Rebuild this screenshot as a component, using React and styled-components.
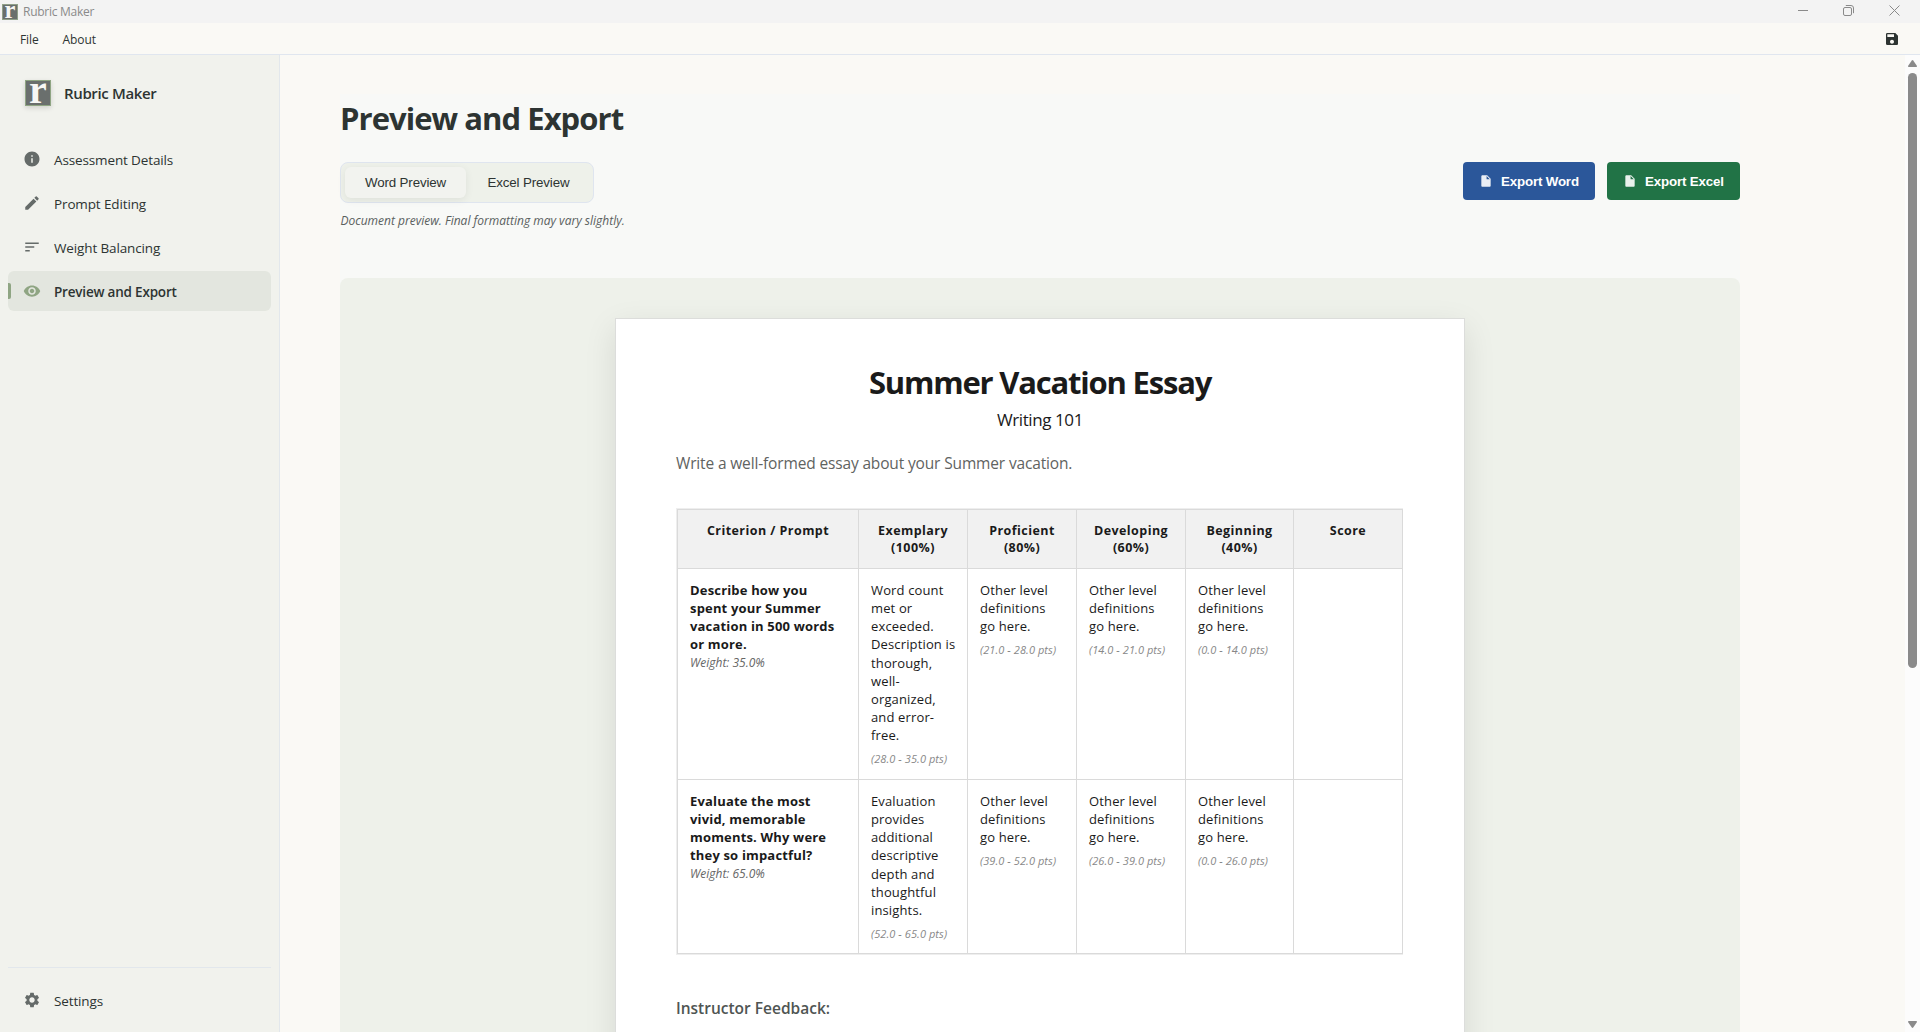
import React, { useState } from 'react';
import styled, { createGlobalStyle, css } from 'styled-components';
import {
    MdInfo,
    MdEdit,
    MdSort,
    MdVisibility,
    MdSettings,
    MdSave,
    MdInsertDriveFile,
} from 'react-icons/md';

const GlobalStyle = createGlobalStyle`
    * {
        box-sizing: border-box;
    }
    body {
        margin: 0;
        overflow: hidden;
        background: #faf9f5;
        color: #2d3432;
        font-family: 'Open Sans', 'Noto Sans', sans-serif;
    }
    h1, h2, h3, p {
        margin: 0;
    }
    button {
        border: none;
        font-family: 'Liberation Sans', Arial, sans-serif;
        font-size: 13.33px;
    }
`;

const Window = styled.div`
    display: flex;
    flex-direction: column;
    height: 100vh;
`;

const TitleBar = styled.header`
    display: flex;
    align-items: center;
    flex: none;
    height: 23px;
    padding: 0 20px 0 2px;
    background: #f3f3f3;
    color: #8a8a8a;
    font-size: 12px;
    letter-spacing: -0.27px;
    .name {
        margin-left: 5px;
        line-height: 23px;
    }
    .controls {
        display: flex;
        gap: 35px;
        margin: -3px 0 0 auto;
    }
`;

const MenuBar = styled.nav`
    display: flex;
    align-items: center;
    flex: none;
    gap: 24px;
    height: 32px;
    padding: 1px 20px 0 20px;
    border-bottom: 1px solid #e0e6ef;
    background: #faf9f5;
    font-size: 12px;
    letter-spacing: -0.1px;
    svg {
        margin-left: auto;
    }
`;

const Body = styled.div`
    display: flex;
    flex: 1;
    min-height: 0;
`;

const Sidebar = styled.aside`
    display: flex;
    flex-direction: column;
    flex: none;
    width: 280px;
    padding: 25px 8px 12px;
    border-right: 1px solid #e2e7ec;
    background: #f1f2ed;
`;

const Brand = styled.div`
    display: flex;
    align-items: center;
    gap: 13px;
    height: 26px;
    margin: 0 0 33px 17px;
    font-size: 15px;
    font-weight: 600;
    letter-spacing: -0.36px;
    svg {
        box-shadow: 0 2px 5px rgba(0, 0, 0, 0.14);
    }
`;

const NavList = styled.div`
    display: flex;
    flex-direction: column;
    gap: 4px;
`;

const NavItem = styled.div`
    display: flex;
    align-items: center;
    position: relative;
    gap: 13px;
    height: 40px;
    padding-left: 15px;
    border-radius: 6px;
    font-size: 13.5px;
    letter-spacing: -0.13px;
    cursor: pointer;
    svg {
        color: #656b69;
    }
    span {
        padding-top: 2px;
    }
    ${props => props.$active && css`
        background: #e3e6df;
        font-weight: 600;
        letter-spacing: -0.2px;
        svg {
            color: #8fa583;
        }
        &::before {
            content: '';
            position: absolute;
            left: 0;
            top: 12px;
            width: 3px;
            height: 16px;
            border-radius: 0 2px 2px 0;
            background: #8fa583;
        }
    `}
`;

const SidebarFooter = styled.div`
    margin-top: auto;
    padding-top: 12px;
    border-top: 1px solid #e2e7ec;
`;

const Main = styled.main`
    flex: 1;
    min-width: 0;
    padding: 39px 0 0 60px;
    overflow: hidden;
`;

const Content = styled.div`
    width: 1400px;
    padding-top: 1px;
    background: #f8f9f7;
`;

const PageTitle = styled.h1`
    margin-bottom: 21px;
    font-size: 31px;
    font-weight: 700;
    line-height: 46px;
    letter-spacing: -0.95px;
`;

const Toolbar = styled.div`
    display: flex;
    align-items: flex-start;
    justify-content: space-between;
    padding-bottom: 48px;
`;

const Toggle = styled.div`
    display: flex;
    gap: 2px;
    width: 254px;
    height: 41px;
    padding: 4px;
    border: 1px solid #dfe5ef;
    border-radius: 8px;
    background: #eef1ea;
`;

const ToggleButton = styled.button`
    flex: 1;
    padding: 0;
    border-radius: 6px;
    background: ${props => (props.$active ? '#f2f3ef' : 'transparent')};
    box-shadow: ${props => (props.$active ? '0 2px 8px rgba(0, 0, 0, 0.07)' : 'none')};
    color: #2d3432;
    letter-spacing: -0.14px;
`;

const Hint = styled.p`
    margin-top: 9px;
    padding-left: 0.5px;
    color: #5a605e;
    font-size: 12px;
    font-style: italic;
    line-height: 18px;
`;

const Actions = styled.div`
    display: flex;
    gap: 12px;
`;

const ExportButton = styled.button`
    display: flex;
    align-items: center;
    gap: 8px;
    width: ${props => props.$width}px;
    height: 38px;
    padding: 0 0 0 16px;
    border-radius: 4px;
    background: ${props => props.$color};
    color: #fff;
    font-weight: 700;
    letter-spacing: -0.17px;
    white-space: nowrap;
    svg {
        flex: none;
        opacity: 0.9;
    }
`;

const PreviewPanel = styled.section`
    display: flex;
    justify-content: center;
    padding: 40px 0;
    border-radius: 8px;
    background: #eef1ea;
`;

const Sheet = styled.article`
    width: 850px;
    min-height: 1100px;
    padding: 41px 60px 60px;
    border: 1px solid #dcdddb;
    background: #fff;
    box-shadow: 0 10px 30px rgba(0, 0, 0, 0.1);
    color: #1a1a1a;
`;

const SheetTitle = styled.h2`
    font-size: 31px;
    font-weight: 700;
    line-height: 44px;
    letter-spacing: -1.2px;
    text-align: center;
`;

const Course = styled.p`
    margin-top: 3px;
    font-size: 17px;
    line-height: 26px;
    letter-spacing: -0.41px;
    text-align: center;
`;

const Description = styled.p`
    margin: 16px 0 31px;
    color: #5f6361;
    font-size: 15.5px;
    line-height: 28px;
    letter-spacing: -0.15px;
`;

const TableFrame = styled.div`
    width: 727px;
    border: 1px solid #eee;
`;

const RubricTable = styled.table`
    width: 725px;
    table-layout: fixed;
    border-collapse: collapse;
    th, td {
        border: 1px solid #dadada;
        vertical-align: top;
        white-space: pre-line;
    }
    th {
        padding: 12px 4px;
        background: #f1f1f1;
        font-size: 12.5px;
        font-weight: 700;
        line-height: 17px;
        letter-spacing: 0.44px;
    }
    td {
        padding: 12px 4px 10px 12px;
        font-size: 13px;
        line-height: 18.15px;
        letter-spacing: 0.14px;
    }
`;

const TableRow = styled.tr`
    height: ${props => props.$height}px;
`;

const Prompt = styled.div`
    font-weight: 700;
    letter-spacing: 0.17px;
`;

const Weight = styled.div`
    margin-top: 0.4px;
    color: #666;
    font-size: 12px;
    font-style: italic;
    line-height: 17px;
    letter-spacing: 0;
`;

const Points = styled.div`
    margin-top: 7px;
    color: #888;
    font-size: 11px;
    font-style: italic;
    line-height: 15.4px;
    letter-spacing: 0.07px;
`;

const Feedback = styled.h3`
    margin-top: 42px;
    color: #4f5553;
    font-size: 15.5px;
    font-weight: 600;
    line-height: 22px;
`;

const Scrollbar = styled.div`
    display: flex;
    flex-direction: column;
    align-items: center;
    flex: none;
    width: 15px;
    padding: 5px 0 4px;
    background: #fcfcfc;
    .thumb {
        width: 9px;
        height: 595px;
        margin: 6px 0 auto;
        border-radius: 5px;
        background: #8a8a8a;
    }
`;

const navItems = [
    { label: 'Assessment Details', icon: MdInfo },
    { label: 'Prompt Editing', icon: MdEdit },
    { label: 'Weight Balancing', icon: MdSort },
    { label: 'Preview and Export', icon: MdVisibility },
];

const columnWidths = [181, 109, 109, 109, 108, 109];

const columns = [
    'Criterion / Prompt',
    'Exemplary\n(100%)',
    'Proficient\n(80%)',
    'Developing\n(60%)',
    'Beginning\n(40%)',
    'Score',
];

const other = 'Other level\ndefinitions\ngo here.';

const criteria = [
    {
        prompt: 'Describe how you\nspent your Summer\nvacation in 500 words\nor more.',
        weight: '35.0%',
        height: 211,
        levels: [
            {
                text: 'Word count\nmet or\nexceeded.\nDescription is\nthorough,\nwell-\norganized,\nand error-\nfree.',
                points: '28.0 - 35.0',
            },
            { text: other, points: '21.0 - 28.0' },
            { text: other, points: '14.0 - 21.0' },
            { text: other, points: '0.0 - 14.0' },
        ],
    },
    {
        prompt: 'Evaluate the most\nvivid, memorable\nmoments. Why were\nthey so impactful?',
        weight: '65.0%',
        height: 174,
        levels: [
            {
                text: 'Evaluation\nprovides\nadditional\ndescriptive\ndepth and\nthoughtful\ninsights.',
                points: '52.0 - 65.0',
            },
            { text: other, points: '39.0 - 52.0' },
            { text: other, points: '26.0 - 39.0' },
            { text: other, points: '0.0 - 26.0' },
        ],
    },
];

const LogoLetter = styled.text`
    fill: #f7f7f5;
    font-family: 'Liberation Serif', 'Times New Roman', serif;
    font-size: 40px;
    font-weight: 700;
    letter-spacing: 0;
`;

const Logo = ({ size }) => (
    <svg width={size} height={size} viewBox="0 0 26 26" overflow="visible">
        <rect x="0.5" y="0.5" width="25" height="25" fill="#6a6f6d" stroke="#8fa583" />
        <LogoLetter x="13" y="22.8" textAnchor="middle">r</LogoLetter>
    </svg>
);

const WindowControls = () => (
    <div className="controls">
        <svg width="11" height="11" fill="none" stroke="#8a8a8a">
            <path d="M1 5.5h10" />
        </svg>
        <svg width="11" height="11" fill="none" stroke="#8a8a8a">
            <rect x="0.5" y="2.5" width="8" height="8" rx="1.5" />
            <path d="M2.8 0.5H8a2.5 2.5 0 0 1 2.5 2.5v5.2" />
        </svg>
        <svg width="11" height="11" fill="none" stroke="#8a8a8a">
            <path d="M0.5 0.5l10 10M10.5 0.5l-10 10" />
        </svg>
    </div>
);

const RubricRow = ({ item }) => (
    <TableRow $height={item.height}>
        <td>
            <Prompt>{item.prompt}</Prompt>
            <Weight>Weight: {item.weight}</Weight>
        </td>
        {item.levels.map((level, i) => (
            <td key={i}>
                {level.text}
                <Points>({level.points} pts)</Points>
            </td>
        ))}
        <td />
    </TableRow>
);

const App = () => {
    const [page, setPage] = useState('Preview and Export');
    const [preview, setPreview] = useState('Word');

    return (
        <Window>
            <GlobalStyle />
            <TitleBar>
                <Logo size={16} />
                <span className="name">Rubric Maker</span>
                <WindowControls />
            </TitleBar>
            <MenuBar>
                <span>File</span>
                <span>About</span>
                <MdSave size={16} />
            </MenuBar>
            <Body>
                <Sidebar>
                    <Brand>
                        <Logo size={26} />
                        Rubric Maker
                    </Brand>
                    <NavList>
                        {navItems.map(({ label, icon: Icon }) => (
                            <NavItem key={label} $active={page === label} onClick={() => setPage(label)}>
                                <Icon size={18} />
                                <span>{label}</span>
                            </NavItem>
                        ))}
                    </NavList>
                    <SidebarFooter>
                        <NavItem>
                            <MdSettings size={18} />
                            <span>Settings</span>
                        </NavItem>
                    </SidebarFooter>
                </Sidebar>
                <Main>
                    <Content>
                        <PageTitle>Preview and Export</PageTitle>
                        <Toolbar>
                            <div>
                                <Toggle>
                                    {['Word', 'Excel'].map(type => (
                                        <ToggleButton
                                            key={type}
                                            $active={preview === type}
                                            onClick={() => setPreview(type)}
                                        >
                                            {type} Preview
                                        </ToggleButton>
                                    ))}
                                </Toggle>
                                <Hint>Document preview. Final formatting may vary slightly.</Hint>
                            </div>
                            <Actions>
                                <ExportButton $color="#2b579a" $width={132}>
                                    <MdInsertDriveFile size={14} />
                                    Export Word
                                </ExportButton>
                                <ExportButton $color="#217346" $width={133}>
                                    <MdInsertDriveFile size={14} />
                                    Export Excel
                                </ExportButton>
                            </Actions>
                        </Toolbar>
                        <PreviewPanel>
                            <Sheet>
                                <SheetTitle>Summer Vacation Essay</SheetTitle>
                                <Course>Writing 101</Course>
                                <Description>Write a well-formed essay about your Summer vacation.</Description>
                                <TableFrame>
                                    <RubricTable>
                                        <colgroup>
                                            {columnWidths.map((width, i) => <col key={i} width={width} />)}
                                        </colgroup>
                                        <thead>
                                            <TableRow $height={59}>
                                                {columns.map(name => <th key={name}>{name}</th>)}
                                            </TableRow>
                                        </thead>
                                        <tbody>
                                            {criteria.map(item => <RubricRow key={item.weight} item={item} />)}
                                        </tbody>
                                    </RubricTable>
                                </TableFrame>
                                <Feedback>Instructor Feedback:</Feedback>
                            </Sheet>
                        </PreviewPanel>
                    </Content>
                </Main>
                <Scrollbar>
                    <svg width="9" height="7" fill="#8a8a8a">
                        <path d="M3.8 0.5q0.7-0.9 1.4 0L9 6q0.2 1-0.8 1H0.8Q-0.2 7 0 6z" />
                    </svg>
                    <div className="thumb" />
                    <svg width="9" height="7" fill="#8a8a8a">
                        <path d="M3.8 6.5q0.7 0.9 1.4 0L9 1q0.2-1-0.8-1H0.8Q-0.2 0 0 1z" />
                    </svg>
                </Scrollbar>
            </Body>
        </Window>
    );
};

export default App;
